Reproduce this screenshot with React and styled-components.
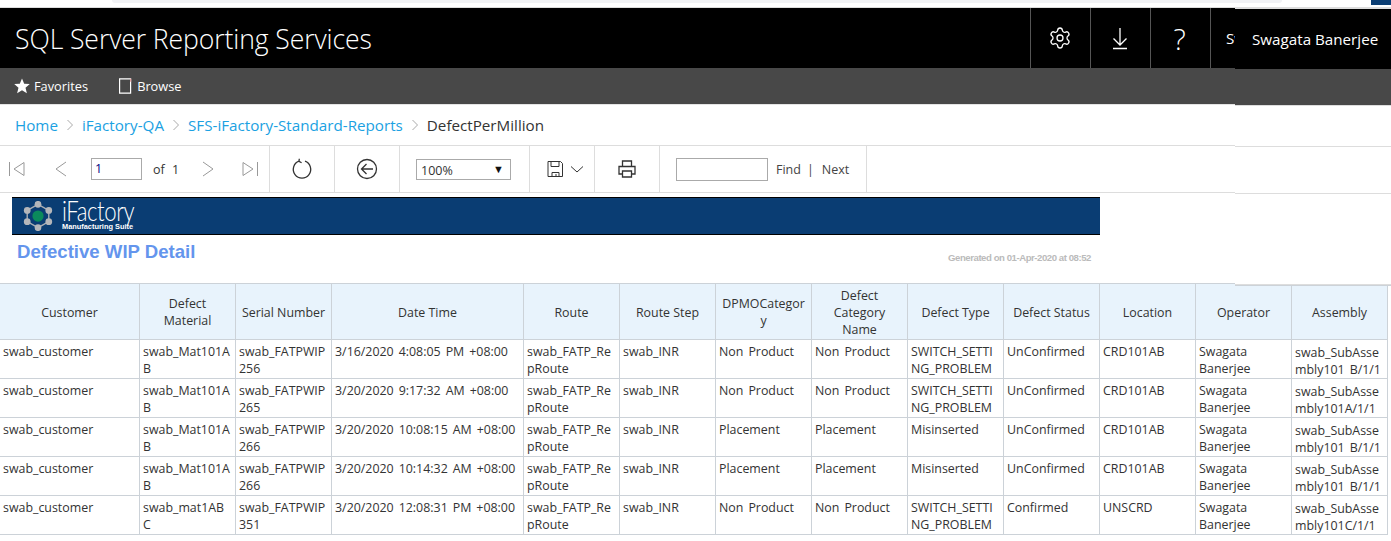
import React from "react";
import styled, { createGlobalStyle } from "styled-components";
import { Settings } from "lucide-react";

const UI = `"Open Sans", "Noto Sans", sans-serif`;

const Global = createGlobalStyle`
  html, body { margin: 0; padding: 0; background: #fff; }
  body { font-family: ${UI}; overflow: hidden; height: 541px; width: 1391px; position: relative; }
`;

const Strip = styled.div`
  height: 7px; border-bottom: 1px solid #ddd; display: flex; align-items: flex-start; padding-left: 112px;
`;
const StripBand = styled.div`width: 1170px; height: 3px; background: #f1f2f5; border-radius: 0 0 4px 4px;`;
const StripTab = styled.div`width: 20px; height: 5px; background: #0a3d73; margin-left: auto;`;

const Header = styled.header`
  height: 60px; background: #000; color: #fff; display: flex; align-items: center; overflow: hidden;
`;
const Brand = styled.div`
  font-size: 26.6px; font-weight: 300; padding: 2px 0 0 15px; flex: 1; letter-spacing: -0.1px;
`;
const HeadCell = styled.div`
  width: 59px; height: 60px; border-left: 1px solid #555; display: flex; align-items: center; justify-content: center;
  box-sizing: content-box; padding-right: 0; font-size: ${p => p.$big ? "29px" : "14px"}; font-weight: 300;
`;
const HeadGlyph = styled.span`display: inline-flex; margin-right: 2px;`;
const HeadTail = styled.div`
  width: 181px; height: 60px; border-left: 1px solid #555; padding-left: 15px; box-sizing: border-box;
  font-size: 15.2px; line-height: 60px; white-space: nowrap;
`;
const Nav = styled.nav`
  height: 36px; background: #484848; color: #fff; display: flex; align-items: center; padding-left: 14px; gap: 30px;
  font-size: 12.8px; border-bottom: 1px solid #e4e4e4;
`;
const NavItem = styled.span`display: inline-flex; align-items: center; gap: 4px;`;

const UserPanel = styled.aside`
  position: absolute; top: 8px; left: 1235px; width: 156px; height: 276px; background: #fff;
  border-top: 1px solid #ddd; border-bottom: 1px solid #ccd2d8; display: flex; flex-direction: column;
`;
const UserName = styled.div`
  height: 60px; background: #000; color: #fff; font-size: 15.2px; line-height: 60px; padding-left: 17px; white-space: nowrap;
`;
const UserNav = styled.div`height: 36px; background: #484848; border-bottom: 1px solid #ddd;`;
const PanelGap = styled.div`height: ${p => p.$h}px; border-bottom: 1px solid #ddd;`;

const Crumbs = styled.div`
  height: 40px; display: flex; align-items: center; padding-left: 15px; font-size: 15.2px; gap: 8px;
`;
const Crumb = styled.a`color: #1ba1e2;`;
const CrumbNow = styled.span`color: #333;`;
const CrumbSep = styled.svg`width: 8px; height: 12px; fill: none; stroke: #aaa; stroke-width: 1;`;

const Toolbar = styled.div`
  height: 46px; border-top: 1px solid #ddd; border-bottom: 1px solid #ddd; display: flex; color: #333;
`;
const Section = styled.div`
  width: ${p => p.$w}px; box-sizing: border-box; border-right: 1px solid #ddd; display: flex; align-items: center;
  justify-content: ${p => p.$left ? "flex-start" : "center"}; padding-left: ${p => p.$pl || 0}px; padding-right: ${p => p.$pr || 0}px;
`;
const Tool = styled.svg`
  width: ${p => p.$s || 20}px; height: ${p => p.$s || 20}px; fill: none; stroke: ${p => p.$off ? "#999" : "#333"};
  stroke-width: ${p => p.$sw || 1}; flex: none; margin-left: ${p => p.$ml || 0}px;
`;
const PageInput = styled.div`
  width: 46px; height: 20px; border: 1px solid #aaa; margin-left: 20px; font-size: 12.5px; line-height: 19px; padding-left: 3px; color: #000080;
`;
const OfText = styled.span`font-size: 12.5px; margin-left: 11px; margin-right: 19px; word-spacing: 4px; white-space: nowrap; color: #333;`;
const ZoomSelect = styled.div`
  width: 95px; height: 21px; border: 1px solid #aaa; font-size: 12.5px; line-height: 20px; padding: 1px 6px 0 4px; box-sizing: border-box;
  display: flex; justify-content: space-between;
`;
const Caret = styled.span`font-size: 11px; color: #111; line-height: 15px;`;
const FindInput = styled.div`width: 90px; height: 21px; border: 1px solid #aaa;`;
const FindLink = styled.span`font-size: 12.5px; color: #444; margin-left: ${p => p.$ml}px;`;

const Report = styled.main`padding-top: 4px;`;
const Banner = styled.div`
  margin-left: 12px; width: 1077px; height: 36px; background: #0a3d73; border-top: 1px solid #000; border-bottom: 1px solid #000;
  display: flex; align-items: center; padding-left: 11px; color: #fff;
`;
const LogoWords = styled.div`display: flex; flex-direction: column; margin-left: 9px; margin-top: -3px;`;
const LogoName = styled.span`
  font-family: "Lato", sans-serif; font-weight: 300; font-size: 27px; line-height: 24px; letter-spacing: -0.5px;
  transform: scaleX(0.82); transform-origin: left center;
`;
const LogoSub = styled.span`font-family: "Liberation Sans", sans-serif; font-weight: 700; font-size: 7.4px; line-height: 7px;`;
const TitleRow = styled.div`
  width: 1074px; margin-left: 17px; height: 48px; display: flex; justify-content: space-between; align-items: flex-start;
  font-family: "Liberation Sans", Arial, sans-serif; font-weight: 700;
`;
const Title = styled.div`font-size: 18.6px; color: #6495ed; margin-top: 6px; line-height: 21px;`;
const Generated = styled.div`font-size: 9.6px; color: #bbb; margin-top: 17px; line-height: 12px; letter-spacing: -0.45px;`;

const Table = styled.table`
  border-collapse: collapse; table-layout: fixed; width: 1388px; margin-left: -1px; font-size: 12.4px; color: #333; word-spacing: 1.8px;
`;
const Th = styled.th`
  box-sizing: border-box; height: 56px; background: #e8f3fc; border: 1px solid #ccd2d8; font-weight: 400; text-align: center; line-height: 17px;
  padding: 1px 3px 0; vertical-align: middle; overflow: hidden; word-spacing: 0;
`;
const Td = styled.td`
  box-sizing: border-box; height: 39px; border: 1px solid #ccd2d8; vertical-align: top; line-height: 17px;
  padding: ${p => p.$shift ? 4 : 3}px 3px 0; white-space: pre; overflow: hidden;
`;

const cols = [140, 96, 96, 192, 96, 96, 96, 96, 96, 96, 96, 96, 96];
const heads = ["Customer", "Defect\nMaterial", "Serial Number", "Date Time", "Route", "Route Step", "DPMOCategor\ny", "Defect\nCategory\nName", "Defect Type", "Defect Status", "Location", "Operator", "Assembly"];
const row = (mat, serial, date, cat, type, status, loc, asm) => [
  "swab_customer", mat, serial, date, "swab_FATP_Re\npRoute", "swab_INR", cat, cat, type, status, loc, "Swagata\nBanerjee", asm,
];
const SW = "SWITCH_SETTI\nNG_PROBLEM";
const rows = [
  row("swab_Mat101A\nB", "swab_FATPWIP\n256", "3/16/2020 4:08:05 PM +08:00", "Non Product", SW, "UnConfirmed", "CRD101AB", "swab_SubAsse\nmbly101 B/1/1"),
  row("swab_Mat101A\nB", "swab_FATPWIP\n265", "3/20/2020 9:17:32 AM +08:00", "Non Product", SW, "UnConfirmed", "CRD101AB", "swab_SubAsse\nmbly101A/1/1"),
  row("swab_Mat101A\nB", "swab_FATPWIP\n266", "3/20/2020 10:08:15 AM +08:00", "Placement", "Misinserted", "UnConfirmed", "CRD101AB", "swab_SubAsse\nmbly101 B/1/1"),
  row("swab_Mat101A\nB", "swab_FATPWIP\n266", "3/20/2020 10:14:32 AM +08:00", "Placement", "Misinserted", "UnConfirmed", "CRD101AB", "swab_SubAsse\nmbly101 B/1/1"),
  row("swab_mat1AB\nC", "swab_FATPWIP\n351", "3/20/2020 12:08:31 PM +08:00", "Non Product", SW, "Confirmed", "UNSCRD", "swab_SubAsse\nmbly101C/1/1"),
];

const Sep = () => <CrumbSep viewBox="0 0 8 12"><path d="M1.5 1l5 5-5 5" /></CrumbSep>;

const hex = [[13, 1], [24.5, 7.5], [24.5, 19.5], [13, 26], [1.5, 19.5], [1.5, 7.5]];
const Logo = () => (
  <svg width="30" height="30" viewBox="-3 -2 32 31">
    <polygon points={hex.map(p => p.join(",")).join(" ")} fill="none" stroke="#a9adb3" strokeWidth="1.5" />
    {hex.map(([x, y]) => <circle key={x + "-" + y} cx={x} cy={y} r="3.6" fill="#b4b6ba" />)}
    <circle cx="13" cy="13.5" r="6" fill="#0b8a5c" />
  </svg>
);

export default function App() {
  return (
    <>
      <Global />
      <Strip><StripBand /><StripTab /></Strip>
      <Header>
        <Brand>SQL Server Reporting Services</Brand>
        <HeadCell><HeadGlyph><Settings size={24} strokeWidth={1.3} /></HeadGlyph></HeadCell>
        <HeadCell>
          <HeadGlyph>
            <svg width="20" height="24" viewBox="0 0 20 24" fill="none" stroke="#fff" strokeWidth="1.3">
              <path d="M10 2v17M3.5 12.500l6.500 6.500 6.500-6.500M3 22.500h14" />
            </svg>
          </HeadGlyph>
        </HeadCell>
        <HeadCell $big><HeadGlyph>?</HeadGlyph></HeadCell>
        <HeadTail>Swagata Banerjee</HeadTail>
      </Header>
      <Nav>
        <NavItem>
          <svg width="16" height="16" viewBox="0 0 16 16"><path fill="#fff" d="M8 .5l2.200 5.200 5.600.4-4.300 3.600 1.400 5.500L8 12.300l-4.900 2.900 1.400-5.500L.2 6.100l5.600-.4z" /></svg>
          Favorites
        </NavItem>
        <NavItem>
          <svg width="15" height="16" viewBox="0 0 15 16" fill="none"><path stroke="#fff" strokeWidth="1.2" d="M1.600.8h11v14.400h-11z" /><path stroke="#e8a0a0" strokeWidth="1.2" d="M12.600.8v3" /></svg>
          Browse
        </NavItem>
      </Nav>
      <Crumbs>
        <Crumb>Home</Crumb><Sep />
        <Crumb>iFactory-QA</Crumb><Sep />
        <Crumb>SFS-iFactory-Standard-Reports</Crumb><Sep />
        <CrumbNow>DefectPerMillion</CrumbNow>
      </Crumbs>
      <Toolbar>
        <Section $w={270} $left $pl={7}>
          <Tool $off viewBox="0 0 20 20"><path d="M2.500 3v14M17 3.500L7 10l10 6.500z" /></Tool>
          <Tool $off $ml={24} viewBox="0 0 20 20"><path d="M15 3L5 10l10 7" /></Tool>
          <PageInput>1</PageInput>
          <OfText>of 1</OfText>
          <Tool $off viewBox="0 0 20 20"><path d="M5 3l10 7-10 7" /></Tool>
          <Tool $off $ml={22} viewBox="0 0 20 20"><path d="M3 3.500L13 10 3 16.500zM17.500 3v14" /></Tool>
        </Section>
        <Section $w={65}>
          <Tool $s={22} $sw={1.3} viewBox="0 0 22 22"><path d="M8 3.200A8.700 8.700 0 1 0 14 3.200M8.300 .8L8 3.400l2.600 1.400" /></Tool>
        </Section>
        <Section $w={65}>
          <Tool $s={22} $sw={1.3} viewBox="0 0 22 22"><circle cx="11" cy="11" r="9.500" /><path d="M17 11H5.500M10.500 6L5.500 11l5 5" /></Tool>
        </Section>
        <Section $w={130} $pr={2}>
          <ZoomSelect>100%<Caret>▼</Caret></ZoomSelect>
        </Section>
        <Section $w={65} $left $pl={16}>
          <Tool $s={18} viewBox="0 0 18 18"><path d="M2 1.500h12.500l2 2v13H2zM5 1.500v5h8v-5M6 16.500v-4h7v4M10 14v2" /></Tool>
          <Tool $s={14} $ml={6} viewBox="0 0 14 14"><path d="M1 4.500L7 10l6-5.500" /></Tool>
        </Section>
        <Section $w={65}>
          <Tool $sw={1.3} viewBox="0 0 20 20"><path d="M5.500 7V2h9v5M5 15H2V7.500h16V15h-3M5.500 12h9v6h-9z" /></Tool>
        </Section>
        <Section $w={207} $left $pl={16}>
          <FindInput />
          <FindLink $ml={8}>Find</FindLink>
          <FindLink $ml={6}>|</FindLink>
          <FindLink $ml={8}>Next</FindLink>
        </Section>
      </Toolbar>
      <Report>
        <Banner>
          <Logo />
          <LogoWords>
            <LogoName>iFactory</LogoName>
            <LogoSub>Manufacturing Suite</LogoSub>
          </LogoWords>
        </Banner>
        <TitleRow>
          <Title>Defective WIP Detail</Title>
          <Generated>Generated on 01-Apr-2020 at 08:52</Generated>
        </TitleRow>
        <Table>
          <colgroup>{cols.map((w, i) => <col key={i} style={{ width: w }} />)}</colgroup>
          <thead>
            <tr>{heads.map(h => (
              <Th key={h}>{h.split("\n").map((l, j) => <React.Fragment key={j}>{j > 0 && <br />}{l}</React.Fragment>)}</Th>
            ))}</tr>
          </thead>
          <tbody>
            {rows.map((r, i) => (
              <tr key={i}>{r.map((c, j) => <Td key={j} $shift={j === 12}>{c}</Td>)}</tr>
            ))}
          </tbody>
        </Table>
      </Report>
      <UserPanel>
        <UserName>Swagata Banerjee</UserName>
        <UserNav />
        <PanelGap $h={40} />
        <PanelGap $h={46} />
        <PanelGap $h={90} />
      </UserPanel>
    </>
  );
}
